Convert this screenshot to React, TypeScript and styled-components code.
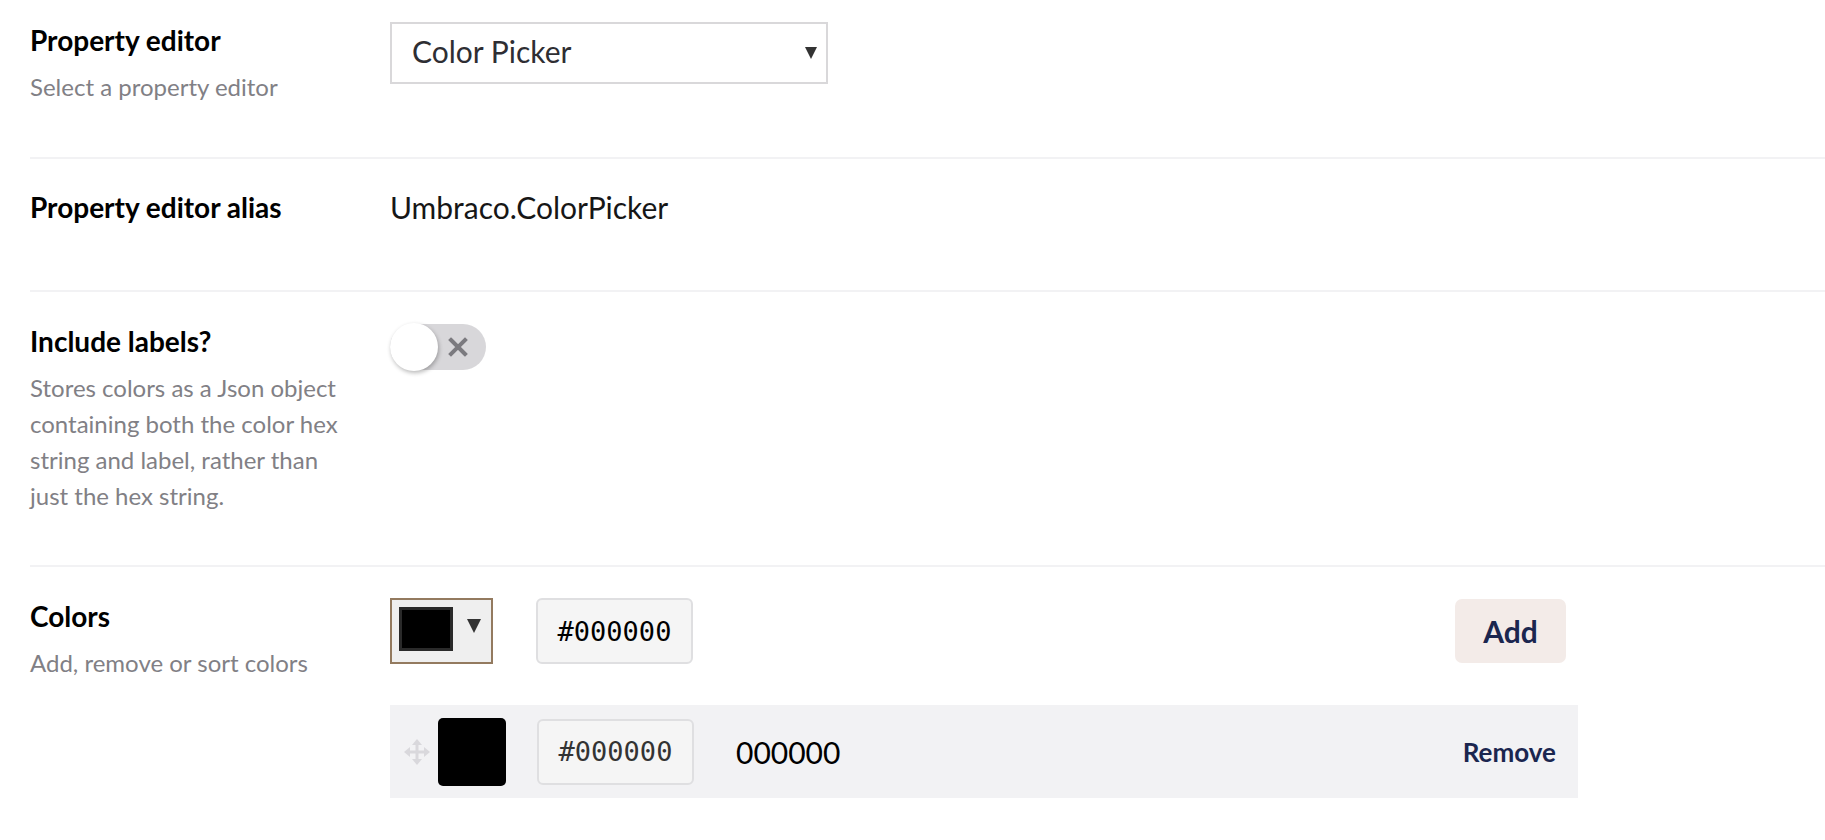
import React from "react";
import styled, { createGlobalStyle } from "styled-components";

const GlobalStyle = createGlobalStyle`
  html, body { margin: 0; padding: 0; background: #ffffff; }
  body { font-family: Lato, "Open Sans", sans-serif; color: #000; }
  * { box-sizing: border-box; }
`;

const Page = styled.main`
  padding-left: 30px;
`;

const Row = styled.section<{ $pt: number; $pb: number; $last?: boolean }>`
  display: grid;
  grid-template-columns: 360px 1fr;
  padding: ${(p) => p.$pt}px 0 ${(p) => p.$pb}px;
  border-bottom: ${(p) => (p.$last ? "none" : "2px solid #f2f2f4")};
`;

const LabelCol = styled.div`
  padding-right: 30px;
`;

const Title = styled.div`
  font-family: Lato, sans-serif;
  font-weight: 700;
  font-size: 28px;
  line-height: 36px;
  color: #000;
`;

const Desc = styled.div`
  margin-top: 11px;
  font-family: Lato, sans-serif;
  font-size: 24px;
  line-height: 36px;
  color: #818085;
`;

const ControlCol = styled.div`
  min-width: 0;
`;

const SelectBox = styled.div`
  width: 438px;
  height: 62px;
  border: 2px solid #d9d8da;
  background: #fff;
  display: flex;
  align-items: center;
  justify-content: space-between;
  padding: 0 9px 4px 20px;
  font-family: Lato, sans-serif;
  font-size: 30px;
  color: #2e2e33;
`;

const SelectCaretWrap = styled.span`
  display: block;
  padding-top: 4px;
`;

const Caret = styled.span<{ $size: number; $color: string }>`
  display: block;
  width: 0;
  height: 0;
  border-left: ${(p) => p.$size / 2}px solid transparent;
  border-right: ${(p) => p.$size / 2}px solid transparent;
  border-top: ${(p) => p.$size}px solid ${(p) => p.$color};
`;

const Value = styled.div`
  font-family: Lato, sans-serif;
  font-size: 30px;
  line-height: 36px;
  color: #161616;
`;

const Toggle = styled.button`
  display: flex;
  align-items: center;
  width: 96px;
  height: 46px;
  margin-top: 1px;
  padding: 0;
  border: none;
  border-radius: 23px;
  background: #d8d7da;
  cursor: pointer;
`;

const Knob = styled.span`
  flex: none;
  width: 48px;
  height: 48px;
  border-radius: 50%;
  background: #fff;
  box-shadow: 1px 2px 4px rgba(0, 0, 0, 0.28);
`;

const ToggleIcon = styled.span`
  flex: 1;
  display: flex;
  align-items: center;
  justify-content: center;
  padding-right: 8px;
`;

const ColorsEditor = styled.div`
  width: 1188px;
  display: flex;
  flex-direction: column;
  gap: 41px;
`;

const AddLine = styled.div`
  display: flex;
  align-items: center;
  padding-right: 12px;
`;

const PickerButton = styled.div`
  width: 103px;
  height: 66px;
  border: 2px solid #937a5f;
  background: #efefef;
  display: flex;
  align-items: flex-start;
  padding: 7px 0 0 7px;
  gap: 14px;
  margin-right: 43px;
`;

const PickerSwatch = styled.span`
  width: 54px;
  height: 44px;
  background: #000;
  border: 3px solid #2a2a2a;
`;

const CaretWrap = styled.span`
  display: block;
  padding-top: 12px;
`;

const HexInput = styled.div<{ $color: string }>`
  width: 157px;
  height: 66px;
  border: 2px solid #dfdfe1;
  border-radius: 6px;
  background: #f5f5f5;
  display: flex;
  align-items: center;
  justify-content: center;
  font-family: "DejaVu Sans Mono", "Liberation Mono", monospace;
  font-size: 27px;
  color: ${(p) => p.$color};
`;

const Spacer = styled.div`
  flex: 1;
`;

const AddButton = styled.button`
  width: 111px;
  height: 64px;
  border: none;
  border-radius: 7px;
  background: #f3ebe8;
  font-family: Lato, sans-serif;
  font-weight: 700;
  font-size: 30px;
  color: #1b264f;
  cursor: pointer;
`;

const ItemRow = styled.div`
  height: 93px;
  background: #f2f2f4;
  display: flex;
  align-items: center;
  padding: 0 22px 0 14px;
`;

const Handle = styled.span`
  display: flex;
  width: 26px;
  margin-right: 8px;
`;

const ItemSwatch = styled.span`
  width: 68px;
  height: 68px;
  border-radius: 5px;
  background: #000;
  margin-right: 31px;
`;

const ItemLabel = styled.span`
  margin-left: 42px;
  font-family: Lato, sans-serif;
  font-size: 30px;
  color: #000;
`;

const RemoveButton = styled.button`
  border: none;
  background: none;
  padding: 0;
  font-family: Lato, sans-serif;
  font-weight: 700;
  font-size: 26px;
  color: #1b264f;
  cursor: pointer;
`;

const XIcon = () => (
  <svg width="20" height="20" viewBox="0 0 20 20" aria-hidden>
    <path d="M3 3 L17 17 M17 3 L3 17" stroke="#7b7a7f" strokeWidth="4" strokeLinecap="square" />
  </svg>
);

const MoveIcon = () => (
  <svg width="26" height="26" viewBox="0 0 26 26" aria-hidden>
    <g fill="#d9d8dc" stroke="#d9d8dc">
      <path d="M13 5 V21 M5 13 H21" strokeWidth="3" fill="none" />
      <path d="M13 0 L18 6 H8 Z" stroke="none" />
      <path d="M13 26 L18 20 H8 Z" stroke="none" />
      <path d="M0 13 L6 8 V18 Z" stroke="none" />
      <path d="M26 13 L20 8 V18 Z" stroke="none" />
    </g>
  </svg>
);

export default function App() {
  return (
    <>
      <GlobalStyle />
      <Page>
        <Row $pt={22} $pb={52}>
          <LabelCol>
            <Title>Property editor</Title>
            <Desc>Select a property editor</Desc>
          </LabelCol>
          <ControlCol>
            <SelectBox>
              <span>Color Picker</span>
              <SelectCaretWrap>
                <Caret $size={12} $color="#333" />
              </SelectCaretWrap>
            </SelectBox>
          </ControlCol>
        </Row>

        <Row $pt={30} $pb={65}>
          <LabelCol>
            <Title>Property editor alias</Title>
          </LabelCol>
          <ControlCol>
            <Value>Umbraco.ColorPicker</Value>
          </ControlCol>
        </Row>

        <Row $pt={31} $pb={51}>
          <LabelCol>
            <Title>Include labels?</Title>
            <Desc>
              Stores colors as a Json object containing both the color hex string and label, rather than just the hex
              string.
            </Desc>
          </LabelCol>
          <ControlCol>
            <Toggle type="button" aria-label="Include labels">
              <Knob />
              <ToggleIcon>
                <XIcon />
              </ToggleIcon>
            </Toggle>
          </ControlCol>
        </Row>

        <Row $pt={31} $pb={20} $last>
          <LabelCol>
            <Title>Colors</Title>
            <Desc>Add, remove or sort colors</Desc>
          </LabelCol>
          <ControlCol>
            <ColorsEditor>
              <AddLine>
                <PickerButton>
                  <PickerSwatch />
                  <CaretWrap>
                    <Caret $size={14} $color="#333" />
                  </CaretWrap>
                </PickerButton>
                <HexInput $color="#000">#000000</HexInput>
                <Spacer />
                <AddButton type="button">Add</AddButton>
              </AddLine>
              <ItemRow>
                <Handle>
                  <MoveIcon />
                </Handle>
                <ItemSwatch />
                <HexInput $color="#333">#000000</HexInput>
                <ItemLabel>000000</ItemLabel>
                <Spacer />
                <RemoveButton type="button">Remove</RemoveButton>
              </ItemRow>
            </ColorsEditor>
          </ControlCol>
        </Row>
      </Page>
    </>
  );
}
